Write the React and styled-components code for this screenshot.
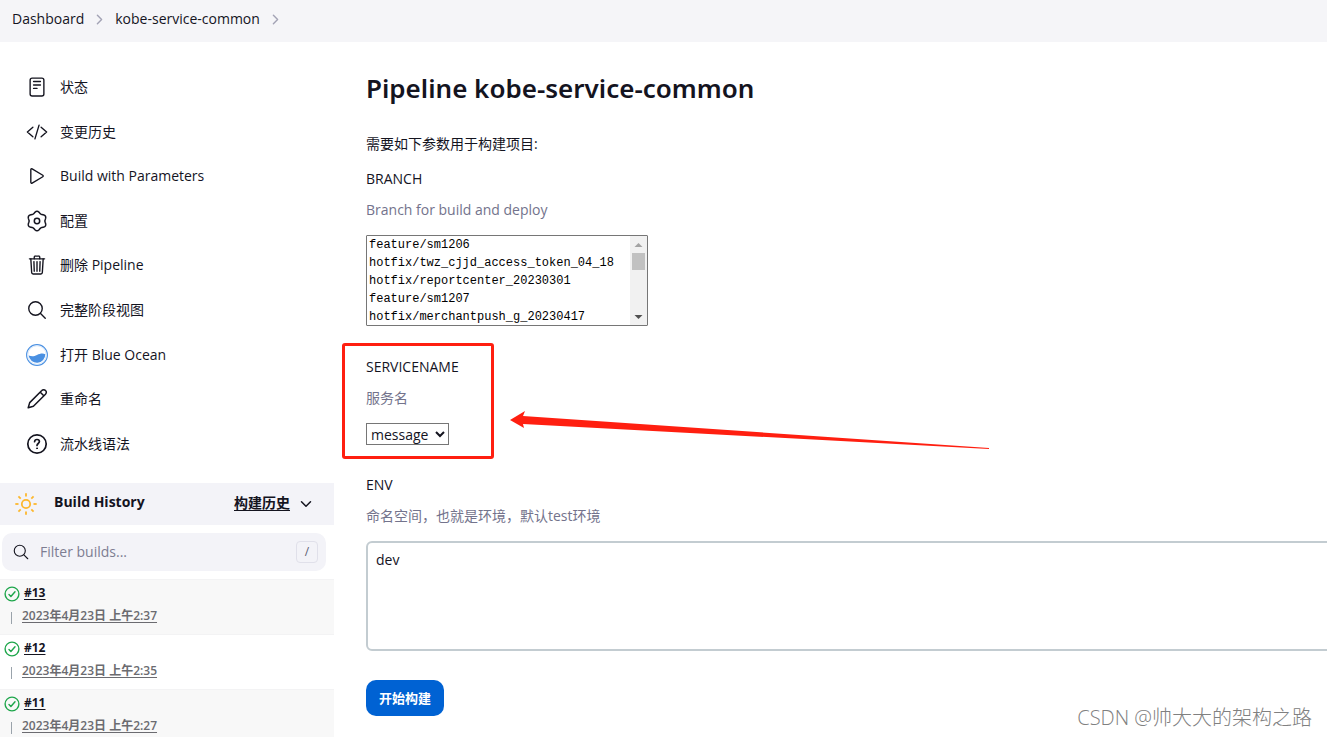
import React from "react";
import styled, { createGlobalStyle, css } from "styled-components";
import {
  IoReaderOutline,
  IoCodeSlashOutline,
  IoPlayOutline,
  IoTrashOutline,
  IoSearchOutline,
  IoChevronForward,
  IoChevronDown,
} from "react-icons/io5";

const GlobalStyle = createGlobalStyle`
  * { box-sizing: border-box; }
  body {
    margin: 0;
    background: #fff;
    color: #14141f;
    overflow-x: hidden;
  }
  a { color: inherit; }
  h1, h2, p, ol, ul { margin: 0; padding: 0; }
  ol, ul { list-style: none; }
`;

const uiText = css`
  font-family: "Open Sans", "Noto Sans CJK SC", sans-serif;
  font-size: 14px;
  line-height: 20px;
`;

const Page = styled.div`
  ${uiText}
  position: relative;
  height: 100vh;
  overflow: hidden;
`;

const Breadcrumbs = styled.nav`
  height: 42px;
  padding: 0 12px 4px;
  background: #f5f5f8;
  display: flex;
  align-items: center;
  gap: 8px;
  a { text-decoration: none; }
  svg { color: #a3a3b5; width: 15px; height: 15px; }
`;

const Body = styled.div`
  display: flex;
  align-items: flex-start;
`;

const Sidebar = styled.aside`
  flex: 0 0 334px;
  padding-top: 23px;
`;

const TaskList = styled.ul`
  display: grid;
  grid-auto-rows: 1fr;
  min-height: 401px;
`;

const TaskLink = styled.a`
  height: 100%;
  padding-left: 26px;
  display: flex;
  align-items: center;
  gap: 12px;
  text-decoration: none;
  svg { width: 22px; height: 22px; flex: none; }
`;

const HistoryHeader = styled.header`
  margin-top: 17px;
  height: 42px;
  padding: 0 20px 0 15px;
  background: #f3f3f8;
  display: flex;
  align-items: center;
  svg { flex: none; }
`;

const HistoryTitle = styled.h2`
  flex: 1;
  margin-left: 17px;
  padding-bottom: 4px;
  font-size: 14px;
  line-height: 20px;
  font-weight: 700;
`;

const TrendLink = styled.a`
  display: flex;
  align-items: center;
  gap: 8px;
  font-weight: 600;
  text-underline-offset: 2px;
  span { padding-bottom: 3px; }
`;

const FilterBar = styled.label`
  margin: 8px 8px 8px 2px;
  height: 38px;
  padding: 0 8px 0 10px;
  border-radius: 10px;
  background: #f3f3f8;
  display: flex;
  align-items: center;
  gap: 10px;
  svg { width: 18px; height: 18px; flex: none; }
`;

const FilterInput = styled.input`
  ${uiText}
  flex: 1;
  min-width: 0;
  padding: 0;
  border: 0;
  outline: 0;
  background: transparent;
  &::placeholder { color: #7d7d92; opacity: 1; }
`;

const Shortcut = styled.kbd`
  width: 22px;
  height: 22px;
  border: 1px solid #e0e0ea;
  border-radius: 4px;
  font: inherit;
  font-size: 12px;
  line-height: 20px;
  text-align: center;
  color: #5d5d73;
`;

const BuildRow = styled.li`
  height: 55px;
  padding: 3px 4px 0;
  border-top: 1px solid #f3f3f4;
  background: ${(p) => (p.$shaded ? "#f8f8f8" : "#fff")};
  font-size: 12px;
  line-height: 20px;
`;

const BuildName = styled.div`
  display: flex;
  align-items: center;
  gap: 4px;
  a {
    padding-bottom: 2px;
    font-size: 12px;
    font-weight: 700;
    text-underline-offset: 2px;
  }
`;

const BuildTime = styled.div`
  margin: 1px 0 0 7px;
  display: flex;
  align-items: center;
  gap: 10px;
  color: #6b6b70;
  a { text-underline-offset: 2px; font-weight: 600; }
  &::before {
    content: "";
    width: 1px;
    height: 12px;
    margin-top: 4px;
    background: #9aa3ab;
  }
`;

const Main = styled.main`
  flex: 1;
  min-width: 0;
  padding: 26px 0 0 32px;
`;

const Title = styled.h1`
  font-family: "Noto Sans", "Noto Sans CJK SC", sans-serif;
  font-size: 26px;
  line-height: 40px;
  font-weight: 600;
`;

const Intro = styled.p`
  margin-top: 26px;
`;

const Param = styled.section`
  position: relative;
  margin-top: ${(p) => p.$gap}px;
  display: flex;
  flex-direction: column;
  align-items: flex-start;
`;

const Description = styled.p`
  margin: 11px 0 15px;
  color: #73738c;
`;

const ListFrame = styled.div`
  width: 282px;
  height: 91px;
  border: 1px solid #767676;
  border-radius: 1px;
  display: flex;
  overflow: hidden;
`;

const BranchList = styled.select`
  flex: 1;
  height: 94px;
  padding: 2px 0 0;
  border: 0;
  outline: 0;
  color: #000;
  background: #fff;
  font-family: "Liberation Mono", monospace;
  font-size: 12px;
  scrollbar-width: none;
  &::-webkit-scrollbar { display: none; }
  option {
    height: 18px;
    min-height: 18px;
    padding: 0 2px;
    line-height: 18px;
  }
`;

const ScrollTrack = styled.div`
  width: 17px;
  background: #f1f1f1;
  display: flex;
  flex-direction: column;
  align-items: center;
`;

const ScrollArrow = styled.svg`
  width: 17px;
  height: 17px;
  flex: none;
`;

const ScrollThumb = styled.div`
  width: 13px;
  height: 17px;
  margin-bottom: auto;
  background: #c1c1c1;
`;

const ServiceSelect = styled.select`
  ${uiText}
  width: 83px;
  height: 22px;
  padding: 0;
  border: 1px solid #767676;
  border-radius: 0;
  background: #fff;
  color: #14141f;
`;

const EnvText = styled.textarea`
  ${uiText}
  display: block;
  width: calc(100% + 8px);
  height: 110px;
  padding: 7px 8px;
  border: 2px solid #c3ccd1;
  border-radius: 6px;
  outline: 0;
  resize: none;
  color: #14141f;
`;

const BuildButton = styled.button`
  ${uiText}
  margin-top: 29px;
  height: 36px;
  padding: 0 13px;
  border: 0;
  border-radius: 10px;
  background: #0062d3;
  color: #fff;
  font-size: 13px;
  font-weight: 700;
`;

const Highlight = styled.div`
  position: absolute;
  left: -24px;
  top: -14px;
  width: 152px;
  height: 116px;
  border: 3px solid #ff1f10;
  border-radius: 3px;
  pointer-events: none;
`;

const Arrow = styled.svg`
  position: absolute;
  left: 144px;
  top: 53px;
  width: 480px;
  height: 40px;
  pointer-events: none;
`;

const Watermark = styled.div`
  position: absolute;
  right: 15px;
  bottom: 4px;
  font-family: "Open Sans", "Noto Sans CJK SC", sans-serif;
  font-weight: 300;
  font-size: 20px;
  line-height: 30px;
  color: #808080;
`;

// Outline of a gear with six rounded teeth, one of them pointing up.
const GEAR_POINTS = Array.from({ length: 120 }, (_, i) => {
  const t = (i / 120) * 2 * Math.PI;
  const r = 8.8 - 0.9 * Math.cos(6 * t);
  return `${(11 + r * Math.cos(t)).toFixed(2)},${(11 + r * Math.sin(t)).toFixed(2)}`;
}).join(" ");

const SettingsIcon = () => (
  <svg viewBox="0 0 22 22" fill="none" stroke="currentColor" strokeWidth="1.500" strokeLinejoin="round">
    <circle cx="11" cy="11" r="2.700" />
    <polygon points={GEAR_POINTS} />
  </svg>
);

const PencilIcon = () => (
  <svg viewBox="0 0 22 22" fill="none" stroke="currentColor" strokeWidth="1.500" strokeLinejoin="round">
    <path d="M2.200 19.800l1.500-5.200L15.800 2.500a2.500 2.500 0 0 1 3.700 0 2.500 2.500 0 0 1 0 3.700L7.400 18.300z" />
    <path d="M14.300 4.200l3.500 3.500" />
  </svg>
);

const BlueOceanIcon = () => (
  <svg viewBox="0 0 22 22">
    <circle cx="11" cy="11" r="10.4" fill="#fff" stroke="#4a90e2" strokeWidth="1.1" />
    <circle cx="11" cy="11" r="9.3" fill="none" stroke="#d3e5fa" strokeWidth="1" />
    <path d="M2.6 11.6C6 12.8 8 12.6 11 11c3-1.600 6-2 8.300-.8A8.400 8.400 0 0 1 2.600 11.600z" fill="#4a90e2" />
  </svg>
);

const HelpIcon = () => (
  <svg viewBox="0 0 22 22" fill="none" stroke="currentColor" strokeWidth="1.700" strokeLinecap="round">
    <circle cx="11" cy="11" r="9.200" />
    <path d="M8.600 8.700C8.700 7.200 9.700 6.500 11 6.500c1.400 0 2.400.9 2.400 2.100 0 1.900-2.400 1.900-2.400 3.900" />
    <circle cx="11" cy="15.300" r=".5" fill="currentColor" strokeWidth="1" />
  </svg>
);

const SunIcon = () => (
  <svg width="22" height="22" viewBox="0 0 22 22" fill="none" stroke="#fdb72d" strokeWidth="1.800">
    <circle cx="11" cy="11" r="4.200" />
    {[0, 45, 90, 135, 180, 225, 270, 315].map((a) => (
      <path key={a} d="M11 .3v3.200" transform={`rotate(${a} 11 11)`} />
    ))}
  </svg>
);

const SuccessIcon = () => (
  <svg width="16" height="16" viewBox="0 0 16 16" fill="none" stroke="#1ea64b" strokeWidth="1.400">
    <circle cx="8" cy="8" r="6.900" />
    <path d="M5 8.500l1.900 2L11 5.700" strokeLinecap="round" strokeLinejoin="round" />
  </svg>
);

const TASKS = [
  ["状态", IoReaderOutline],
  ["变更历史", IoCodeSlashOutline],
  ["Build with Parameters", IoPlayOutline],
  ["配置", SettingsIcon],
  ["删除 Pipeline", IoTrashOutline],
  ["完整阶段视图", IoSearchOutline],
  ["打开 Blue Ocean", BlueOceanIcon],
  ["重命名", PencilIcon],
  ["流水线语法", HelpIcon],
];

const BUILDS = [
  ["#13", "2023年4月23日 上午2:37"],
  ["#12", "2023年4月23日 上午2:35"],
  ["#11", "2023年4月23日 上午2:27"],
];

const BRANCHES = [
  "feature/sm1206",
  "hotfix/twz_cjjd_access_token_04_18",
  "hotfix/reportcenter_20230301",
  "feature/sm1207",
  "hotfix/merchantpush_g_20230417",
];

export default function App() {
  return (
    <Page>
      <GlobalStyle />
      <Breadcrumbs>
        <a href="#dashboard">Dashboard</a>
        <IoChevronForward />
        <a href="#job">kobe-service-common</a>
        <IoChevronForward />
      </Breadcrumbs>
      <Body>
        <Sidebar>
          <TaskList>
            {TASKS.map(([label, Icon]) => (
              <li key={label}>
                <TaskLink href="#task">
                  <Icon />
                  {label}
                </TaskLink>
              </li>
            ))}
          </TaskList>
          <HistoryHeader>
            <SunIcon />
            <HistoryTitle>Build History</HistoryTitle>
            <TrendLink href="#trend">
              <span>构建历史</span>
              <IoChevronDown size={16} />
            </TrendLink>
          </HistoryHeader>
          <FilterBar>
            <IoSearchOutline />
            <FilterInput placeholder="Filter builds..." aria-label="Filter builds" />
            <Shortcut>/</Shortcut>
          </FilterBar>
          <ol>
            {BUILDS.map(([name, time], i) => (
              <BuildRow key={name} $shaded={i % 2 === 0}>
                <BuildName>
                  <SuccessIcon />
                  <a href="#build">{name}</a>
                </BuildName>
                <BuildTime>
                  <a href="#build">{time}</a>
                </BuildTime>
              </BuildRow>
            ))}
          </ol>
        </Sidebar>
        <Main>
          <Title>Pipeline kobe-service-common</Title>
          <Intro>需要如下参数用于构建项目:</Intro>
          <Param $gap={15}>
            <label htmlFor="branch">BRANCH</label>
            <Description>Branch for build and deploy</Description>
            <ListFrame>
              <BranchList id="branch" size={5}>
                {BRANCHES.map((b) => (
                  <option key={b}>{b}</option>
                ))}
              </BranchList>
              <ScrollTrack>
                <ScrollArrow viewBox="0 0 17 17">
                  <path d="M4.500 11h8l-4-4z" fill="#a3a3a3" />
                </ScrollArrow>
                <ScrollThumb />
                <ScrollArrow viewBox="0 0 17 17">
                  <path d="M4.500 7h8l-4 4z" fill="#505050" />
                </ScrollArrow>
              </ScrollTrack>
            </ListFrame>
          </Param>
          <Param $gap={31}>
            <label htmlFor="service">SERVICENAME</label>
            <Description>服务名</Description>
            <ServiceSelect id="service" defaultValue="message">
              <option>message</option>
            </ServiceSelect>
            <Highlight />
            <Arrow viewBox="0 0 480 40">
              <path d="M0 10L15 1l-2 5L479 38v1L13 14l1 4z" fill="#ff1f10" />
            </Arrow>
          </Param>
          <Param $gap={30}>
            <label htmlFor="env">ENV</label>
            <Description>命名空间，也就是环境，默认test环境</Description>
            <EnvText id="env" defaultValue="dev" />
          </Param>
          <BuildButton type="button">开始构建</BuildButton>
        </Main>
      </Body>
      <Watermark>CSDN @帅大大的架构之路</Watermark>
    </Page>
  );
}
